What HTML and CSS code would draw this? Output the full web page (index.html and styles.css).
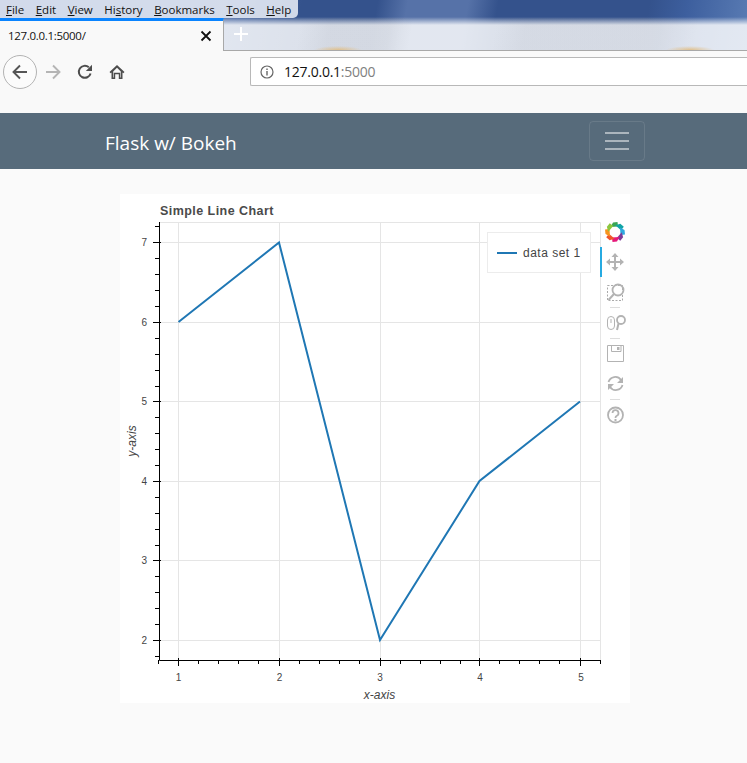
FILE: index.html
```html
<!DOCTYPE html>
<html lang="en">
<head>
  <meta charset="UTF-8">
  <title>Flask w/ Bokeh</title>
  <link rel="stylesheet" href="styles.css">
</head>
<body>

<div class="browser-top">
  <div class="menu-bar">
    <span class="menu-item"><u>F</u>ile</span>
    <span class="menu-item"><u>E</u>dit</span>
    <span class="menu-item"><u>V</u>iew</span>
    <span class="menu-item">Hi<u>s</u>tory</span>
    <span class="menu-item"><u>B</u>ookmarks</span>
    <span class="menu-item"><u>T</u>ools</span>
    <span class="menu-item"><u>H</u>elp</span>
  </div>
  <div class="tab-row">
    <div class="tab">
      <span class="tab-title">127.0.0.1:5000/</span>
      <svg class="tab-close" width="12" height="12" viewBox="0 0 12 12">
        <path d="M1.5 1.5 L10.5 10.5 M10.5 1.5 L1.5 10.5" stroke="#111" stroke-width="1.8" fill="none"/>
      </svg>
    </div>
    <svg class="new-tab" width="16" height="16" viewBox="0 0 16 16">
      <path d="M8 1 V15 M1 8 H15" stroke="#fff" stroke-width="2" fill="none"/>
    </svg>
  </div>
</div>

<div class="toolbar">
  <div class="nav-buttons">
    <div class="back-btn">
      <svg width="18" height="18" viewBox="0 0 18 18">
        <path d="M16 9 H2.5 M9 2.5 L2.5 9 L9 15.500" stroke="#555" stroke-width="1.9" fill="none"/>
      </svg>
    </div>
    <svg class="nav-icon forward" width="18" height="18" viewBox="0 0 18 18">
      <path d="M2 9 H15.500 M9 2.500 L15.500 9 L9 15.500" stroke="#b5b5b5" stroke-width="1.9" fill="none"/>
    </svg>
    <svg class="nav-icon reload" width="16" height="16" viewBox="0 0 16 16">
      <path d="M13.600 9.500 A6 6 0 1 1 11.800 3.300" stroke="#4d4d4d" stroke-width="2" fill="none"/>
      <path d="M15 0.800 V7 H8.800 Z" fill="#4d4d4d"/>
    </svg>
    <svg class="nav-icon home" width="16" height="16" viewBox="0 0 16 16">
      <path d="M8 1 L15.500 8 L14.300 9.200 L13.500 8.500 V15 H9.800 V10.300 H6.200 V15 H2.500 V8.500 L1.700 9.200 L0.500 8 Z M4.200 7.400 V13.500 H4.800 V8.800 H11.200 V13.500 H11.800 V7.400 L8 3.800 Z" fill="#4d4d4d"/>
    </svg>
  </div>
  <div class="url-box">
    <svg class="info-icon" width="14" height="14" viewBox="0 0 14 14">
      <circle cx="7" cy="7" r="6" stroke="#666" stroke-width="1.200" fill="none"/>
      <path d="M7 6 V10.500 M7 3.400 V4.900" stroke="#666" stroke-width="1.400" fill="none"/>
    </svg>
    <span class="url-host">127.0.0.1</span><span class="url-port">:5000</span>
  </div>
</div>

<nav class="navbar">
  <span class="brand">Flask w/ Bokeh</span>
  <div class="toggler">
    <span class="toggler-bar"></span>
    <span class="toggler-bar"></span>
    <span class="toggler-bar"></span>
  </div>
</nav>

<main class="content">
  <div class="plot-card">
    <svg class="plot" width="510" height="509" viewBox="0 0 510 509">
      <text class="plot-title" x="40" y="21">Simple Line Chart</text>

      <g class="grid">
        <path d="M58.500 28 V466 M159.500 28 V466 M260.500 28 V466 M359.500 28 V466 M460.500 28 V466"/>
        <path d="M39 48.500 H480 M39 128.500 H480 M39 207.500 H480 M39 287.500 H480 M39 366.500 H480 M39 446.500 H480"/>
        <path d="M39 28.500 H480.500 V466"/>
      </g>

      <polyline class="data-line" points="58.500,128 159,48.500 260,446 359.500,287 460,207.500"/>

      <g class="axis">
        <path d="M39.500 28 V466.500 H481"/>
        <!-- major ticks -->
        <path d="M58.500 464 V472 M159.500 464 V472 M260.500 464 V472 M359.500 464 V472 M460.500 464 V472"/>
        <path d="M33 48.500 H41 M33 128.500 H41 M33 207.500 H41 M33 287.500 H41 M33 366.500 H41 M33 446.500 H41"/>
        <!-- minor ticks -->
        <path d="M38.500 466 V470 M78.500 466 V470 M98.500 466 V470 M118.500 466 V470 M138.500 466 V470 M179.500 466 V470 M199.500 466 V470 M219.500 466 V470 M239.500 466 V470 M280.500 466 V470 M300.500 466 V470 M320.500 466 V470 M340.500 466 V470 M379.500 466 V470 M399.500 466 V470 M419.500 466 V470 M439.500 466 V470 M480.500 466 V470"/>
        <path d="M35 32.500 H39 M35 64.500 H39 M35 80.500 H39 M35 96.500 H39 M35 112.500 H39 M35 144.500 H39 M35 160.500 H39 M35 176.500 H39 M35 192.500 H39 M35 223.500 H39 M35 239.500 H39 M35 255.500 H39 M35 271.500 H39 M35 303.500 H39 M35 319.500 H39 M35 335.500 H39 M35 351.500 H39 M35 382.500 H39 M35 398.500 H39 M35 414.500 H39 M35 430.500 H39 M35 462.500 H39"/>
      </g>

      <g class="tick-labels">
        <text x="58.500" y="487" text-anchor="middle">1</text>
        <text x="159.500" y="487" text-anchor="middle">2</text>
        <text x="260" y="487" text-anchor="middle">3</text>
        <text x="360" y="487" text-anchor="middle">4</text>
        <text x="461" y="487" text-anchor="middle">5</text>
        <text x="27" y="52" text-anchor="end">7</text>
        <text x="27" y="132" text-anchor="end">6</text>
        <text x="27" y="211" text-anchor="end">5</text>
        <text x="27" y="291" text-anchor="end">4</text>
        <text x="27" y="370" text-anchor="end">3</text>
        <text x="27" y="450" text-anchor="end">2</text>
      </g>
      <text class="axis-label" x="259.500" y="505" text-anchor="middle">x-axis</text>
      <text class="axis-label" transform="translate(16 247) rotate(-90)" text-anchor="middle">y-axis</text>

      <g class="legend">
        <rect class="legend-box" x="367.500" y="38.500" width="103" height="40"/>
        <path class="data-line" d="M377 59 H397"/>
        <text class="legend-text" x="403" y="63">data set 1</text>
      </g>

      <!-- tools -->
      <rect class="active-tool" x="480" y="53" width="2" height="30"/>
      <g class="logo" transform="translate(495 38)">
        <path d="M-4.500 -5 L-2 -9.500 L2.500 -10 L3 -5.500 Z" fill="#3aa655"/>
        <path d="M-4.500 -5 L-2 -9.500 L2.500 -10 L3 -5.500 Z" fill="#12a5a5" transform="rotate(45)"/>
        <path d="M-4.500 -5 L-2 -9.500 L2.500 -10 L3 -5.500 Z" fill="#2fa9e0" transform="rotate(90)"/>
        <path d="M-4.500 -5 L-2 -9.500 L2.500 -10 L3 -5.500 Z" fill="#7d3c98" transform="rotate(135)"/>
        <path d="M-4.500 -5 L-2 -9.500 L2.500 -10 L3 -5.500 Z" fill="#e5197a" transform="rotate(180)"/>
        <path d="M-4.500 -5 L-2 -9.500 L2.500 -10 L3 -5.500 Z" fill="#f0552b" transform="rotate(225)"/>
        <path d="M-4.500 -5 L-2 -9.500 L2.500 -10 L3 -5.500 Z" fill="#f7941d" transform="rotate(270)"/>
        <path d="M-4.500 -5 L-2 -9.500 L2.500 -10 L3 -5.500 Z" fill="#8cc63f" transform="rotate(315)"/>
      </g>
      <g class="tool-icons">
        <!-- pan -->
        <path class="tool-thick" d="M495 61 V75 M488 68 H502"/>
        <path class="tool-fill" d="M495 59 L498.500 63 H491.500 Z M495 77 L498.500 73 H491.500 Z M486 68 L490 64.500 V71.500 Z M504 68 L500 64.500 V71.500 Z"/>
        <!-- box zoom -->
        <rect class="tool-dash" x="487.500" y="91.500" width="15" height="15"/>
        <circle class="tool-lens" cx="498" cy="96" r="5.500"/>
        <path class="tool-thick" d="M494 100 L488.500 106"/>
        <path class="tool-sep" d="M490 113.500 H500 M490 144.500 H500 M490 205.500 H500"/>
        <!-- wheel zoom -->
        <rect class="tool-line" x="487.500" y="122.500" width="7" height="13" rx="3.500"/>
        <path class="tool-line" d="M491 125 V129"/>
        <circle class="tool-lens" cx="501" cy="126" r="4"/>
        <path class="tool-thick" d="M498.500 129.500 L497 136"/>
        <!-- save -->
        <path class="tool-line" d="M487.500 151.500 H503.500 V167.500 H487.500 Z"/>
        <path class="tool-line" d="M491.500 151.500 V157.500 H501 V151.500"/>
        <rect class="tool-fill" x="497" y="153" width="2.500" height="3"/>
        <!-- reset -->
        <path class="tool-arc" d="M488.500 188 A7 7 0 0 1 501 186"/>
        <path class="tool-arc" d="M502.500 191 A7 7 0 0 1 490 193"/>
        <path class="tool-fill" d="M503 183 V189 H497 Z M488 196 V190 H494 Z"/>
        <!-- help -->
        <circle class="tool-arc" cx="495.500" cy="221" r="7.500"/>
        <path class="tool-arc" d="M492.500 219 A3 3 0 1 1 496.500 222 Q495.500 222.500 495.500 224"/>
        <rect class="tool-fill" x="494.500" y="225" width="2" height="2"/>
      </g>
    </svg>
  </div>
</main>

</body>
</html>
```
FILE: styles.css
```css
html, body {
  margin: 0;
  padding: 0;
}

body {
  height: 763px;
  overflow: hidden;
  background: #fafafa;
  font-family: 'Open Sans', 'Liberation Sans', Arial, sans-serif;
}

/* window frame behind the menu and the tab */
.browser-top {
  height: 51px;
  box-sizing: border-box;
  background:
    linear-gradient(180deg, rgba(255,255,255,0) 0, rgba(255,255,255,0) 17px, rgba(255,255,255,0.83) 25px, rgba(255,255,255,0.83) 100%),
    linear-gradient(100deg, #3f5f9c 0, #4f6da6 30%, #34528c 40%, #34528c 50%, #5672a8 54%, #5672a8 62%, #34528c 66%, #34528c 86%, #3d5f9e 91%, #5a7cb4 100%);
}

.menu-bar {
  display: flex;
  height: 18px;
  width: 298px;
  box-sizing: border-box;
  padding-left: 6px;
  gap: 11.500px;
  align-items: center;
  background: rgba(226, 232, 243, 0.9);
  border-radius: 0 0 5px 0;
  font-size: 11.500px;
  color: #111;
}

/* the two orange smudges are the wallpaper showing through */
.tab-row {
  display: flex;
  align-items: center;
  height: 33px;
  box-sizing: border-box;
  border-bottom: 1px solid #a8a8a8;
  background:
    radial-gradient(ellipse 24px 4px at 338px 32px, #e0c08c 0, rgba(224, 192, 140, 0) 100%),
    radial-gradient(ellipse 24px 4px at 690px 32px, #e0c08c 0, rgba(224, 192, 140, 0) 100%),
    linear-gradient(100deg, rgba(90, 95, 105, 0) 40%, rgba(90, 95, 105, 0.07) 44%, rgba(90, 95, 105, 0.07) 52%, rgba(90, 95, 105, 0) 55%, rgba(90, 95, 105, 0) 66%, rgba(90, 95, 105, 0.06) 70%, rgba(90, 95, 105, 0.06) 88%, rgba(90, 95, 105, 0) 93%);
}

.tab {
  display: flex;
  align-items: center;
  justify-content: space-between;
  width: 224px;
  height: 33px;
  box-sizing: border-box;
  padding: 0 8px;
  background: #f9f9f9;
  border-top: 3px solid #0a84ff;
  border-right: 1px solid #a8a8a8;
}

.tab-title {
  font-size: 11.500px;
  letter-spacing: -0.3px;
  color: #111;
}

.tab-close {
  margin-right: 3px;
}

.new-tab {
  margin-left: 9px;
}

.toolbar {
  display: flex;
  align-items: flex-start;
  height: 62px;
  box-sizing: border-box;
  padding: 4px 0 0 3px;
  background: #f9f9f9;
}

.nav-buttons {
  display: flex;
  align-items: center;
  width: 247px;
  height: 34px;
}

.back-btn {
  display: flex;
  align-items: center;
  justify-content: center;
  width: 34px;
  height: 34px;
  box-sizing: border-box;
  background: #fbfbfb;
  border: 1px solid #b3b3b3;
  border-radius: 50%;
}

.nav-icon {
  flex: none;
}

.forward {
  margin-left: 7px;
}

.reload {
  margin-left: 15px;
}

.home {
  margin-left: 16px;
}

.url-box {
  display: flex;
  align-items: center;
  flex: 1;
  height: 29px;
  margin-top: 2px;
  box-sizing: border-box;
  padding-left: 9px;
  background: #fff;
  border: 1px solid #b8b8b8;
  border-right: none;
  border-radius: 2px 0 0 2px;
  font-size: 14px;
  letter-spacing: -0.25px;
}

.info-icon {
  margin-right: 10px;
}

.url-host {
  color: #111;
}

.url-port {
  color: #808080;
}

.navbar {
  display: flex;
  align-items: center;
  justify-content: space-between;
  height: 56px;
  box-sizing: border-box;
  padding: 0 102px 0 105px;
  background: #576b7b;
}

.brand {
  margin-top: 3px;
  font-size: 19px;
  color: #fff;
}

.toggler {
  display: flex;
  flex-direction: column;
  justify-content: center;
  align-items: center;
  gap: 6px;
  width: 56px;
  height: 40px;
  box-sizing: border-box;
  border: 1px solid rgba(255, 255, 255, 0.1);
  border-radius: 4px;
}

.toggler-bar {
  display: block;
  width: 24px;
  height: 2px;
  background: rgba(255, 255, 255, 0.5);
}

.content {
  padding: 25px 0 0 120px;
}

.plot-card {
  width: 510px;
  height: 509px;
  background: #fff;
}

.plot {
  display: block;
  font-family: 'Liberation Sans', Arial, sans-serif;
}

.plot-title {
  font-size: 12.500px;
  font-weight: bold;
  letter-spacing: 0.45px;
  fill: #4a4a4a;
}

.grid path {
  fill: none;
  stroke: #e5e5e5;
  stroke-width: 1;
}

.data-line {
  fill: none;
  stroke: #1f77b4;
  stroke-width: 2;
}

.axis path {
  fill: none;
  stroke: #000;
  stroke-width: 1;
}

.tick-labels text {
  font-size: 10px;
  fill: #444;
}

.axis-label {
  font-size: 12px;
  font-style: italic;
  fill: #444;
}

.legend-box {
  fill: #fff;
  stroke: #ececec;
  stroke-width: 1;
}

.legend-text {
  font-size: 12px;
  letter-spacing: 0.5px;
  fill: #444;
}

.active-tool {
  fill: #26aae1;
}

.tool-thick {
  fill: none;
  stroke: #b3b3b3;
  stroke-width: 2;
}

.tool-fill {
  fill: #b3b3b3;
}

.tool-line,
.tool-arc,
.tool-lens {
  fill: none;
  stroke: #b3b3b3;
  stroke-width: 1;
}

.tool-arc,
.tool-lens {
  stroke-width: 1.800;
}

.tool-dash {
  fill: none;
  stroke: #aaa;
  stroke-width: 1;
  stroke-dasharray: 2 1.500;
}

.tool-sep {
  fill: none;
  stroke: #ddd;
  stroke-width: 1;
}
```
